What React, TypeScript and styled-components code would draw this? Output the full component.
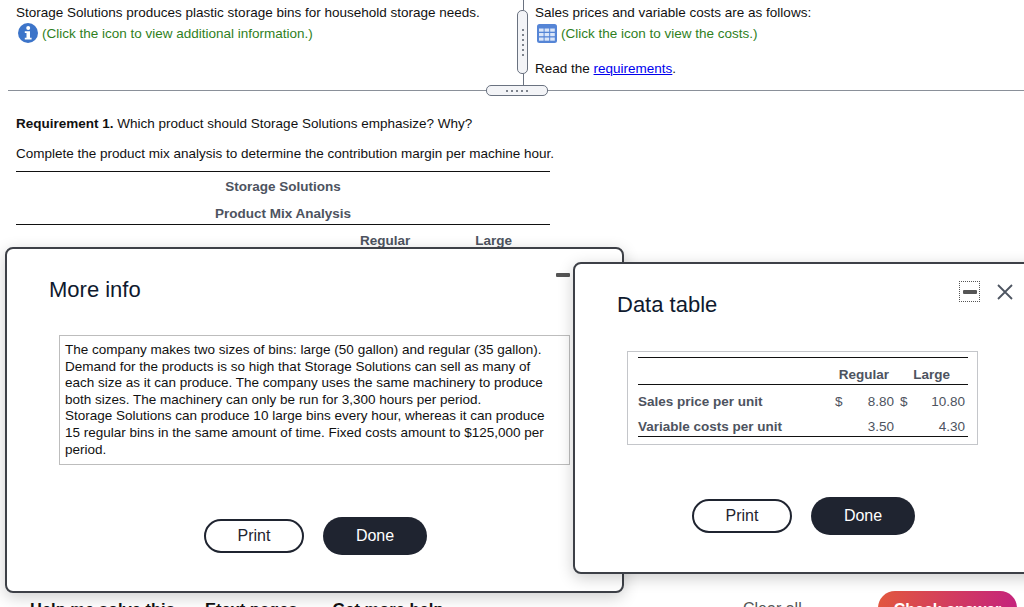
import styled, { createGlobalStyle } from "styled-components";

const GlobalStyle = createGlobalStyle`
    html, body {
        margin: 0;
        padding: 0;
        background: #fff;
    }
    body {
        font-family: "Liberation Sans", Arial, sans-serif;
    }
`;

const InfoIcon = () => (
    <svg width="20" height="20" viewBox="0 0 20 20">
        <circle cx="10" cy="10" r="10" fill="#3c74c9" />
        <circle cx="10.2" cy="5" r="2" fill="#fff" />
        <path d="M6.8 8.2h5.2v6.6h1.6v1.7H6.8v-1.7h1.7v-4.9H6.8z" fill="#fff" />
    </svg>
);

const GridIcon = () => (
    <svg width="20" height="19" viewBox="0 0 20 19">
        <rect width="20" height="19" rx="2.5" fill="#5585d6" />
        {[2, 7.6, 13.2].map(x =>
            [4.5, 9, 13.5].map(y => <rect key={`${x}-${y}`} x={x} y={y} width="4.6" height="3.2" fill="#dbe6f8" />)
        )}
    </svg>
);

const CloseIcon = () => (
    <svg width="16" height="16" viewBox="0 0 16 16">
        <path d="M1 1l14 14M15 1L1 15" stroke="#4d5561" strokeWidth="1.8" fill="none" />
    </svg>
);

const App = () => {
    return <Page>
        <GlobalStyle />
        <TopPanel>
            <LeftCol>
                <Line>Storage Solutions produces plastic storage bins for household storage needs.</Line>
                <HintRow>
                    <InfoIcon />
                    <Hint>(Click the icon to view additional information.)</Hint>
                </HintRow>
            </LeftCol>
            <RightCol>
                <Line>Sales prices and variable costs are as follows:</Line>
                <HintRow>
                    <GridIcon />
                    <Hint>(Click the icon to view the costs.)</Hint>
                </HintRow>
                <ReadLine>Read the <a href="#req">requirements</a>.</ReadLine>
            </RightCol>
            <VerticalGrip>
                {[0, 1, 2, 3, 4, 5].map(i => <GripDot key={i} />)}
            </VerticalGrip>
            <HorizontalGrip>
                {[0, 1, 2, 3, 4].map(i => <GripDot key={i} />)}
            </HorizontalGrip>
        </TopPanel>

        <Content>
            <Question><b>Requirement 1.</b> Which product should Storage Solutions emphasize? Why?</Question>
            <Instruction>Complete the product mix analysis to determine the contribution margin per machine hour.</Instruction>
            <AnalysisHead>
                <AnalysisTitle>Storage Solutions</AnalysisTitle>
                <AnalysisTitle>Product Mix Analysis</AnalysisTitle>
            </AnalysisHead>
            <AnalysisCols>
                <span>Regular</span>
                <LargeHead>Large</LargeHead>
            </AnalysisCols>
        </Content>

        <Footer>
            <FooterLink $gap={30}>Help me solve this</FooterLink>
            <FooterLink $gap={35}>Etext pages</FooterLink>
            <FooterLink $gap={0}>Get more help</FooterLink>
            <ClearAll>Clear all</ClearAll>
            <CheckButton>Check answer</CheckButton>
        </Footer>

        <InfoWindow>
            <MinimizeDash />
            <WindowTitle>More info</WindowTitle>
            <InfoBox>
                The company makes two sizes of bins: large (50 gallon) and regular (35 gallon).
                Demand for the products is so high that Storage Solutions can sell as many of
                each size as it can produce. The company uses the same machinery to produce
                both sizes. The machinery can only be run for 3,300 hours per period.<br />
                Storage Solutions can produce 10 large bins every hour, whereas it can produce
                15 regular bins in the same amount of time. Fixed costs amount to $125,000 per
                period.
            </InfoBox>
            <InfoButtons>
                <PrintButton>Print</PrintButton>
                <DoneButton>Done</DoneButton>
            </InfoButtons>
        </InfoWindow>

        <DataWindow>
            <WindowControls>
                <FocusBox><Dash /></FocusBox>
                <CloseIcon />
            </WindowControls>
            <WindowTitle>Data table</WindowTitle>
            <TableBox>
                <DataGrid>
                    <colgroup>
                        <Col $w={197} />
                        <Col $w={20} />
                        <Col $w={45} />
                        <Col $w={20} />
                        <Col $w={48} />
                    </colgroup>
                    <thead>
                        <tr>
                            <LabelCell />
                            <HeadCell colSpan={2} $pad={11}>Regular</HeadCell>
                            <HeadCell colSpan={2} $pad={18}>Large</HeadCell>
                        </tr>
                    </thead>
                    <tbody>
                        <tr>
                            <LabelCell>Sales price per unit</LabelCell>
                            <SignCell>$</SignCell>
                            <ValueCell $pad={6}>8.80</ValueCell>
                            <SignCell>$</SignCell>
                            <ValueCell $pad={3}>10.80</ValueCell>
                        </tr>
                        <tr>
                            <LabelCell>Variable costs per unit</LabelCell>
                            <SignCell />
                            <ValueCell $pad={6}>3.50</ValueCell>
                            <SignCell />
                            <ValueCell $pad={3}>4.30</ValueCell>
                        </tr>
                    </tbody>
                </DataGrid>
            </TableBox>
            <DataButtons>
                <PrintButton>Print</PrintButton>
                <DoneButton>Done</DoneButton>
            </DataButtons>
        </DataWindow>
    </Page>;
};

const Page = styled.div`
    position: relative;
    width: 1024px;
    height: 607px;
    overflow: hidden;
    display: flex;
    flex-direction: column;
    font-size: 13.5px;
    color: #111;
`;

const TopPanel = styled.div`
    position: relative;
    display: flex;
    height: 90px;
    margin-left: 8px;
    flex-shrink: 0;
    border-bottom: 1px solid #8a9099;
`;

const LeftCol = styled.div`
    width: 527px;
    padding: 5px 0 0 8px;
    box-sizing: border-box;
`;

const RightCol = styled.div`
    padding-top: 5px;
`;

const Line = styled.div`
    line-height: 16px;
`;

const HintRow = styled.div`
    display: flex;
    align-items: center;
    gap: 4px;
    margin: 2px 0 0 2px;
    height: 20px;
`;

const Hint = styled.span`
    color: #2f7f1d;
`;

const ReadLine = styled.div`
    margin-top: 18px;
    line-height: 16px;

    a {
        color: #0000ee;
    }
`;

const VerticalGrip = styled.div`
    position: absolute;
    left: 509px;
    top: 10px;
    width: 9px;
    height: 62px;
    border: 1px solid #6a7280;
    border-radius: 5px;
    background: #f3f4f7;
    display: flex;
    flex-direction: column;
    align-items: center;
    justify-content: center;
    gap: 3px;

    &::before, &::after {
        content: "";
        position: absolute;
        left: 5px;
        width: 1px;
        background: #6a7280;
    }
    &::before {
        top: -11px;
        height: 10px;
    }
    &::after {
        top: 63px;
        height: 17px;
    }
`;

const HorizontalGrip = styled.div`
    position: absolute;
    left: 478px;
    top: 85px;
    width: 60px;
    height: 9px;
    border: 1px solid #6a7280;
    border-radius: 5px;
    background: #f3f4f7;
    display: flex;
    align-items: center;
    justify-content: center;
    gap: 3px;
`;

const GripDot = styled.span`
    width: 2px;
    height: 2px;
    background: #555c68;
    border-radius: 50%;
`;

const Content = styled.div`
    padding: 25px 0 0 16px;
    width: 534px;
    flex-shrink: 0;
`;

const Question = styled.div`
    line-height: 16px;
`;

const Instruction = styled.div`
    margin-top: 14px;
    line-height: 16px;
    padding-bottom: 9px;
    border-bottom: 1px solid #111;
    white-space: nowrap;
`;

const AnalysisHead = styled.div`
    padding: 7px 0 2px;
    border-bottom: 1px solid #111;
    text-align: center;
    width: 534px;
`;

const AnalysisTitle = styled.div`
    font-weight: bold;
    color: #4d5360;
    line-height: 16px;
    margin-bottom: 11px;

    &:last-child {
        margin-bottom: 0;
    }
`;

const AnalysisCols = styled.div`
    display: flex;
    padding: 8px 0 0 344px;
    font-weight: bold;
    color: #4d5360;
    line-height: 16px;
`;

const LargeHead = styled.span`
    margin-left: 65px;
`;

const Footer = styled.div`
    position: relative;
    display: flex;
    flex-shrink: 0;
    margin-top: auto;
    height: 6px;
    padding-left: 30px;
    font-size: 16.5px;
    font-weight: bold;
    line-height: 16px;
`;

const FooterLink = styled.span<{ $gap: number }>`
    margin-right: ${p => p.$gap}px;
    white-space: nowrap;
`;

const ClearAll = styled.span`
    position: absolute;
    left: 743px;
    top: 0;
    font-size: 16px;
    font-weight: normal;
    color: #555;
`;

const CheckButton = styled.span`
    position: absolute;
    left: 878px;
    top: -10px;
    width: 139px;
    height: 34px;
    padding-top: 11px;
    box-sizing: border-box;
    text-align: center;
    font-size: 16px;
    font-weight: bold;
    white-space: nowrap;
    color: #fff;
    border-radius: 17px;
    background: linear-gradient(100deg, #e2583e, #c4227e);
`;

const Window = styled.div`
    position: absolute;
    box-sizing: border-box;
    background: #fff;
    border: 2px solid #3d4047;
    border-radius: 8px;
    box-shadow: 0 4px 16px rgba(0, 0, 0, 0.2);
`;

const InfoWindow = styled(Window)`
    left: 5px;
    top: 247px;
    width: 619px;
    height: 346px;
    padding: 28px 0 0 42px;
`;

const DataWindow = styled(Window)`
    left: 573px;
    top: 262px;
    width: 470px;
    height: 312px;
    padding: 28px 0 0 42px;
`;

const WindowTitle = styled.div`
    font-size: 22px;
    line-height: 26px;
    color: #0f1a2e;
`;

const MinimizeDash = styled.span`
    position: absolute;
    left: 549px;
    top: 24px;
    width: 14px;
    height: 4px;
    border-radius: 1px;
    background: #555;
`;

const WindowControls = styled.div`
    position: absolute;
    left: 384px;
    top: 17px;
    display: flex;
    align-items: center;
    gap: 17px;
`;

const FocusBox = styled.span`
    width: 19px;
    height: 19px;
    border: 1px dotted #555;
    display: flex;
    align-items: center;
    justify-content: center;
`;

const Dash = styled.span`
    width: 14px;
    height: 4px;
    border-radius: 1px;
    background: #555;
`;

const InfoBox = styled.div`
    box-sizing: border-box;
    width: 511px;
    height: 130px;
    margin: 32px 0 0 10px;
    padding: 6px 7px 6px 5px;
    border: 1px solid #bdbdbd;
    line-height: 16.6px;
`;

const InfoButtons = styled.div`
    display: flex;
    align-items: center;
    gap: 19px;
    margin: 52px 0 0 155px;
`;

const DataButtons = styled.div`
    display: flex;
    align-items: center;
    gap: 19px;
    margin: 52px 0 0 75px;
`;

const PrintButton = styled.button`
    width: 100px;
    height: 34px;
    padding: 0;
    background: #fff;
    border: 2px solid #1f2430;
    border-radius: 17px;
    color: #1f2430;
    font: 16px "Liberation Sans", Arial, sans-serif;
`;

const DoneButton = styled.button`
    width: 104px;
    height: 38px;
    padding: 0;
    background: #1f2430;
    border: none;
    border-radius: 19px;
    color: #fff;
    font: 16px "Liberation Sans", Arial, sans-serif;
`;

const TableBox = styled.div`
    box-sizing: border-box;
    width: 351px;
    height: 94px;
    margin: 33px 0 0 10px;
    padding: 5px 9px 0 10px;
    border: 1px solid #c4c6ca;
`;

const DataGrid = styled.table`
    width: 330px;
    table-layout: fixed;
    border-collapse: collapse;
    border-top: 1px solid #111;
    border-bottom: 1px solid #111;
    font-size: 13.5px;
    color: #4d5360;

    thead th {
        height: 27px;
        border-bottom: 1px solid #111;
    }
    tbody th, tbody td {
        height: 26px;
    }
    th, td {
        padding: 0 0 2px;
        box-sizing: border-box;
        vertical-align: bottom;
        white-space: nowrap;
    }
`;

const Col = styled.col<{ $w: number }>`
    width: ${p => p.$w}px;
`;

const LabelCell = styled.th.attrs({ scope: "row" })`
    text-align: left;
    font-weight: bold;
`;

const HeadCell = styled.th<{ $pad: number }>`
    text-align: right;
    font-weight: bold;

    && {
        padding-right: ${p => p.$pad}px;
    }
`;

const SignCell = styled.td``;

const ValueCell = styled.td<{ $pad: number }>`
    text-align: right;

    && {
        padding-right: ${p => p.$pad}px;
    }
`;

export default App;
